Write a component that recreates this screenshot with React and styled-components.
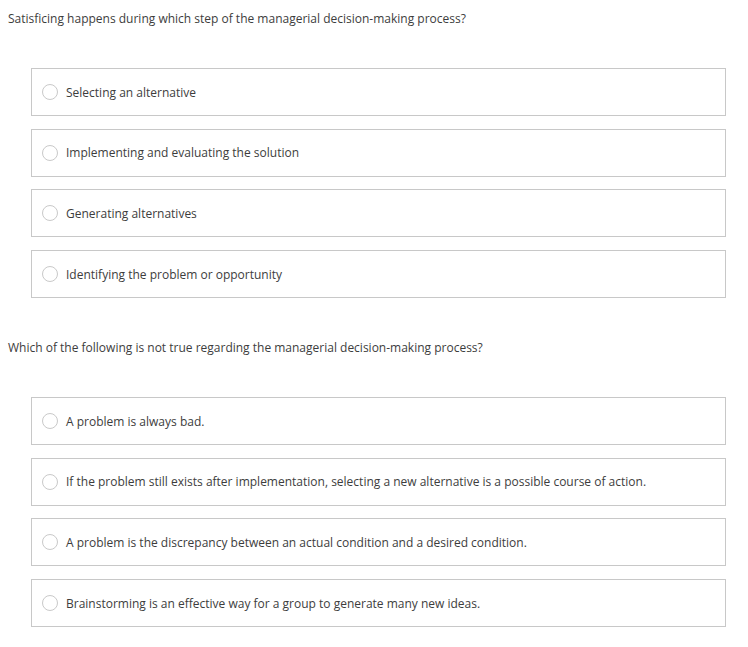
import React, { useState } from 'react';
import styled, { createGlobalStyle } from 'styled-components';

const GlobalStyle = createGlobalStyle`
  body {
    margin: 0;
    background: #fff;
    font-family: "Open Sans", "Liberation Sans", sans-serif;
    color: #3d3d3d;
  }
`;

const Page = styled.div`
  padding: 0 22px 20px 8px;
`;

const Question = styled.div`
  margin-top: ${(p) => (p.first ? '10px' : '41px')};
`;

const Prompt = styled.p`
  margin: 0;
  font-size: 12px;
  line-height: 18px;
`;

const Options = styled.div`
  margin: 40px 0 0 23px;
  display: flex;
  flex-direction: column;
  gap: 12.7px;
`;

const Option = styled.label`
  display: flex;
  align-items: center;
  box-sizing: border-box;
  height: 48px;
  padding-left: 10px;
  border: 1px solid #c8c8c8;
  background: #fff;
  cursor: pointer;
  font-size: 12px;
`;

const Radio = styled.span`
  box-sizing: border-box;
  width: 16px;
  height: 16px;
  border-radius: 50%;
  border: 1px solid ${(p) => (p.checked ? '#4a7bd0' : '#c9c9c9')};
  margin-right: 8px;
  flex-shrink: 0;
  display: flex;
  align-items: center;
  justify-content: center;

  &::after {
    content: '';
    width: 8px;
    height: 8px;
    border-radius: 50%;
    background: ${(p) => (p.checked ? '#4a7bd0' : 'transparent')};
  }
`;

const questions = [
  {
    text: 'Satisficing happens during which step of the managerial decision-making process?',
    options: [
      'Selecting an alternative',
      'Implementing and evaluating the solution',
      'Generating alternatives',
      'Identifying the problem or opportunity',
    ],
  },
  {
    text: 'Which of the following is not true regarding the managerial decision-making process?',
    options: [
      'A problem is always bad.',
      'If the problem still exists after implementation, selecting a new alternative is a possible course of action.',
      'A problem is the discrepancy between an actual condition and a desired condition.',
      'Brainstorming is an effective way for a group to generate many new ideas.',
    ],
  },
];

const App = () => {
  const [answers, setAnswers] = useState({});

  return (
    <Page>
      <GlobalStyle />
      {questions.map((q, qi) => (
        <Question key={qi} first={qi === 0}>
          <Prompt>{q.text}</Prompt>
          <Options>
            {q.options.map((opt, oi) => (
              <Option key={oi} onClick={() => setAnswers({ ...answers, [qi]: oi })}>
                <Radio checked={answers[qi] === oi} />
                {opt}
              </Option>
            ))}
          </Options>
        </Question>
      ))}
    </Page>
  );
};

export default App;
